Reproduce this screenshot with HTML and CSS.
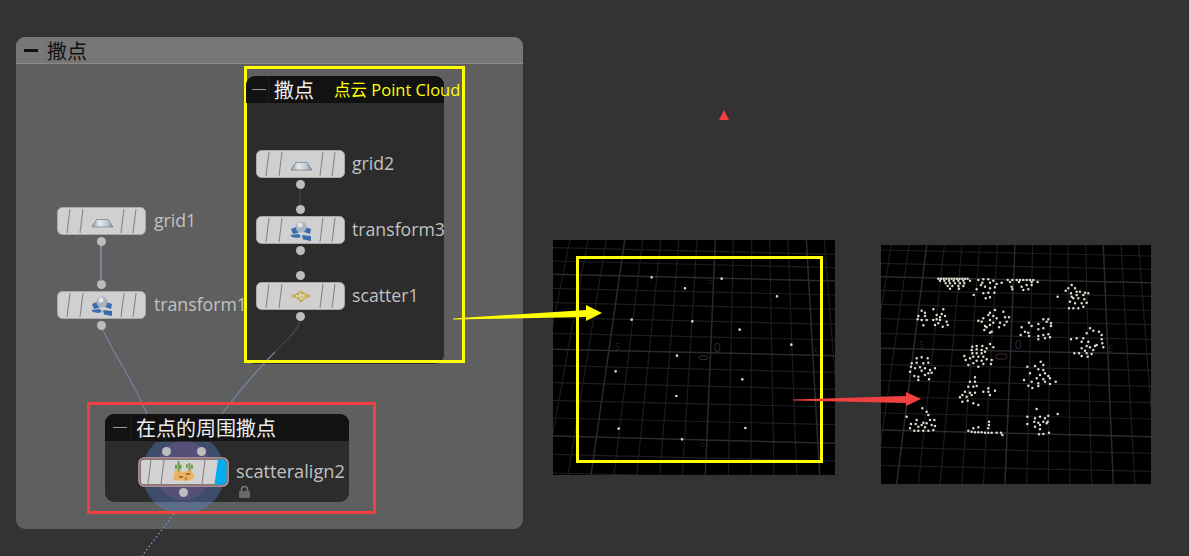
FILE: index.html
```html
<!DOCTYPE html>
<html lang="zh">
<head>
<meta charset="utf-8">
<title>撒点</title>
<link rel="stylesheet" href="styles.css">
</head>
<body>
<svg width="0" height="0" class="defs">
  <defs>
    <linearGradient id="gridFace" x1="0" x2="1" y1="0" y2="0">
      <stop offset="0" stop-color="#8f979e"/><stop offset=".35" stop-color="#e6eaec"/><stop offset=".7" stop-color="#c3ccd6"/><stop offset="1" stop-color="#7f95b0"/>
    </linearGradient>
    <symbol id="body" viewBox="0 0 89 28">
      <rect x=".5" y=".5" width="88" height="27" rx="5" fill="#d0d0d0" stroke="#a9a9a9"/>
      <path d="M13 2 10 26M26 2 23 26M67 2 64 26M79 2 76 26" stroke="#858585" stroke-width="1.100" fill="none"/>
    </symbol>
    <symbol id="ico-grid" viewBox="0 0 89 28">
      <path d="M35 20 39.500 12.500H51L56 20Z" fill="url(#gridFace)" stroke="#74797e" stroke-width=".7"/>
    </symbol>
    <symbol id="ico-transform" viewBox="0 0 89 28">
      <path d="M35 13 41 10.500 44 13 42 17 37 18ZM49 11 55 13 54 18 48 16ZM34 19 43 18 45 21 41 22 36 21ZM46 19 55 20 55 25 47 23.500Z" fill="#3a6cae"/>
      <circle cx="45" cy="11" r="5.500" fill="#aab3be"/>
      <circle cx="44" cy="9" r="2.500" fill="#e4e8ec"/>
    </symbol>
    <symbol id="ico-scatter" viewBox="0 0 89 28">
      <path d="M34.500 14 41 11 45 8 49 11 55.500 14 49 17 45 20.500 41 17Z" fill="#c6b266"/>
      <path d="M39 14 45 10.500 51 14 45 18Z" fill="#dfd49e"/>
      <path d="M42 12.500h0M46 11.500h0M49 14h0M43 16h0M46 15h0M38 14h0M52 14h0M45 19h0" stroke="#9c8a40" stroke-width="1.500" stroke-linecap="round"/>
    </symbol>
  </defs>
</svg>

<main class="canvas">
  <section class="netbox outer">
    <header class="netbox-head"><span class="minus"></span><h2>撒点</h2></header>
  </section>

  <div class="node n-grid1">
    <span class="dot dot-out"></span>
    <svg class="node-body"><use href="#body"/><use href="#ico-grid"/></svg>
    <span class="node-label">grid1</span>
  </div>
  <div class="node n-transform1">
    <span class="dot dot-in"></span><span class="dot dot-out"></span>
    <svg class="node-body"><use href="#body"/><use href="#ico-transform"/></svg>
    <span class="node-label">transform1</span>
  </div>

  <section class="netbox inner-a">
    <header class="netbox-head"><span class="minus"></span><h2>撒点</h2><span class="note">点云 Point Cloud</span></header>
    <div class="node n-grid2">
      <span class="dot dot-out"></span>
      <svg class="node-body"><use href="#body"/><use href="#ico-grid"/></svg>
      <span class="node-label">grid2</span>
    </div>
    <div class="node n-transform3">
      <span class="dot dot-in"></span><span class="dot dot-out"></span>
      <svg class="node-body"><use href="#body"/><use href="#ico-transform"/></svg>
      <span class="node-label">transform3</span>
    </div>
    <div class="node n-scatter1">
      <span class="dot dot-in"></span><span class="dot dot-out"></span>
      <svg class="node-body"><use href="#body"/><use href="#ico-scatter"/></svg>
      <span class="node-label">scatter1</span>
    </div>
  </section>

  <section class="netbox inner-b">
    <header class="netbox-head"><span class="minus"></span><h2>在点的周围撒点</h2></header>
  </section>
  <span class="halo"></span><span class="halo-core"></span>

  <svg class="wires" width="1189" height="556" viewBox="0 0 1189 556">
    <path d="M101 246V281" stroke="#8799b3" stroke-width="1.400" fill="none"/>
    <path d="M103 330C110 348 132 378 147 414" stroke="#7389a8" stroke-width="1.100" fill="none"/>
    <path d="M222 414C240 390 262 365 275 352" stroke="#7389a8" stroke-width="1.100" fill="none"/>
    <path d="M300 321C296 334 284 342 275 352" stroke="#3f4e63" stroke-width="1.100" fill="none"/>
    <path d="M300 189V205" stroke="#3f4e63" stroke-width="1" fill="none"/>
    <path d="M300 255V271" stroke="#3f4e63" stroke-width="1" stroke-dasharray="1.500 2" fill="none"/>
    <path d="M174 514 142 556" stroke="#6f93cc" stroke-width="1.400" stroke-dasharray="1.500 2.500" fill="none"/>
  </svg>

  <div class="node n-align">
    <span class="dot dot-in-a"></span><span class="dot dot-in-b"></span><span class="dot dot-out-c"></span>
    <svg class="align-body" width="91" height="30" viewBox="0 0 91 30">
      <rect x="1" y="1" width="89" height="28" rx="5.500" fill="#2a2222" stroke="#c49c9c" stroke-width="1.600"/>
      <rect x="2.500" y="2.500" width="86" height="25" rx="4" fill="#d2d2d2"/>
      <path d="M80 2.500H84.500A4 4 0 0 1 88.500 6.500V23.500A4 4 0 0 1 84.500 27.500H76.500Z" fill="#00aeef"/>
      <path d="M13 3 10 27M26 3 23 27M67 3 64 27" stroke="#858585" stroke-width="1.100" fill="none"/>
      <path d="M35 23 36.500 14 42 12.500 45 15.500 53 12.500 57 20.500 50 24Z" fill="#e9b364"/>
      <path d="M40.500 13.500V5M42.500 11V8.500M38 11V8.500M51.500 13V7M54 11V8.500M49 10V8" stroke="#6c9f4c" stroke-width="2" stroke-linecap="round"/>
      <path d="M41 20H45M48 17H52M47 21.500H49" stroke="#b26a2e" stroke-width="1.800"/>
    </svg>
    <span class="node-label">scatteralign2</span>
  </div>
  <svg class="lock" width="13" height="14" viewBox="0 0 13 14">
    <path d="M3.500 6V4.500A3 3 0 0 1 9.500 4.500V6" stroke="#777" stroke-width="1.600" fill="none"/>
    <rect x="1" y="6" width="11" height="7" rx="1" fill="#6a6a6a"/>
  </svg>

  <figure class="view view-a">
    <svg width="282" height="235" viewBox="25 15 846 705">
      <rect x="25" y="15" width="846" height="705" fill="#000"/>
      <path class="grid-minor" d="M76 15-67 720M130 15 2 720M185 15 70 720M294 15 208 720M348 15 276 720M403 15 345 720M457 15 413 720M566 15 551 720M621 15 619 720M675 15 688 720M730 15 756 720M839 15 894 720M25 38 871 58M25 78 871 98M25 160 871 180M25 203 871 223M25 248 871 268M25 295 871 315M25 392 871 412M25 443 871 463M25 496 871 516M25 549 871 569M25 658 871 678M25 714 871 734"/>
      <path class="grid-major" d="M240 15 139 720M512 15 482 720M785 15 825 720M25 118 871 138M25 343 871 362M25 603 871 625"/>
      <ellipse cx="476" cy="368" rx="14" ry="6" fill="none" stroke="#4a2c2c" stroke-width="3"/>
      <text class="vlabel big" x="518" y="350">0</text>
      <text class="vlabel" x="214" y="345">-5</text>
      <text class="vlabel" x="815" y="360">5</text>
      <text class="vlabel" x="470" y="636">-5</text>
      <text class="vlabel" x="495" y="146">5</text>
      <path class="pts-a" d="M321 127h0M421 160h0M531 131h0M697 184h0M261 254h0M443 259h0M585 284h0M740 329h0M397 362h0M213 409h0M593 433h0M395 483h0M222 581h0M602 579h0M412 613h0"/>
    </svg>
  </figure>

  <figure class="view view-b">
    <svg width="270" height="239" viewBox="18 15 810 717">
      <rect x="18" y="15" width="810" height="717" fill="#000"/>
      <path class="grid-minor" d="M49 15-65 732M102 15 0 732M208 15 130 732M261 15 195 732M314 15 260 732M367 15 325 732M473 15 455 732M526 15 520 732M579 15 585 732M632 15 650 732M738 15 780 732M791 15 845 732M18 30 828 48M18 70 828 88M18 151 828 169M18 193 828 211M18 236 828 254M18 280 828 298M18 373 828 391M18 421 828 439M18 470 828 488M18 519 828 537M18 622 828 640M18 676 828 694"/>
      <path class="grid-major" d="M155 15 65 732M420 15 390 732M685 15 715 732M18 110 828 128M18 325 828 342M18 570 828 590"/>
      <rect x="362" y="342" width="34" height="15" rx="7" fill="none" stroke="#4a2c2c" stroke-width="3"/>
      <text class="vlabel big" x="430" y="326">0</text>
      <text class="vlabel" x="137" y="323">-5</text>
      <text class="vlabel" x="707" y="337">5</text>
      <text class="vlabel" x="378" y="597">-5</text>
      <path class="pts-b" d="M190 116h0M198 116h0M206 116h0M214 116h0M222 116h0M230 116h0M238 116h0M246 116h0M254 116h0M262 116h0M270 116h0M278 116h0M195 122h0M208 122h0M222 122h0M236 122h0M250 122h0M265 122h0M285 122h0M212 130h0M225 130h0M240 130h0M255 130h0M268 130h0M218 138h0M232 138h0M250 138h0M265 138h0M225 146h0M252 146h0M310 120h0M325 118h0M340 118h0M355 122h0M322 128h0M345 128h0M365 132h0M380 128h0M305 148h0M330 140h0M345 145h0M360 142h0M296 165h0M325 160h0M340 158h0M358 158h0M332 175h0M345 172h0M318 135h0M398 120h0M412 120h0M425 120h0M435 120h0M445 120h0M455 120h0M465 120h0M475 120h0M405 126h0M432 126h0M470 126h0M488 126h0M410 140h0M412 148h0M440 140h0M455 135h0M470 135h0M445 150h0M460 148h0M590 135h0M580 145h0M572 152h0M600 145h0M615 155h0M630 158h0M640 160h0M588 160h0M605 165h0M625 165h0M595 175h0M610 175h0M628 178h0M585 185h0M600 190h0M620 190h0M635 188h0M582 205h0M595 205h0M610 205h0M625 200h0M548 170h0M605 155h0M590 170h0M140 212h0M150 218h0M175 208h0M205 208h0M130 228h0M150 228h0M185 225h0M200 222h0M210 228h0M128 238h0M140 240h0M155 240h0M175 240h0M185 238h0M195 240h0M215 245h0M145 256h0M190 250h0M180 255h0M203 260h0M218 255h0M195 232h0M345 218h0M360 210h0M385 215h0M355 228h0M340 225h0M325 235h0M310 242h0M320 245h0M345 240h0M365 235h0M390 232h0M402 232h0M330 258h0M345 255h0M355 248h0M375 248h0M395 245h0M328 270h0M350 275h0M372 262h0M388 255h0M335 262h0M345 278h0M505 238h0M520 238h0M462 248h0M490 252h0M515 245h0M528 250h0M440 262h0M470 258h0M490 268h0M505 265h0M528 258h0M450 275h0M437 285h0M462 288h0M460 278h0M490 288h0M505 285h0M520 283h0M525 292h0M490 298h0M510 295h0M645 265h0M655 272h0M672 275h0M635 280h0M680 285h0M625 295h0M680 298h0M588 298h0M605 295h0M620 305h0M640 305h0M682 310h0M635 318h0M660 318h0M685 322h0M620 325h0M645 322h0M630 332h0M655 330h0M665 315h0M598 340h0M612 340h0M635 340h0M650 342h0M620 348h0M638 350h0M292 320h0M305 318h0M322 318h0M345 312h0M355 322h0M290 330h0M305 328h0M320 330h0M335 325h0M292 340h0M305 340h0M320 340h0M330 335h0M268 348h0M295 350h0M310 350h0M325 350h0M272 360h0M285 355h0M305 362h0M320 362h0M335 358h0M350 360h0M280 375h0M295 370h0M310 380h0M325 372h0M348 372h0M125 355h0M140 352h0M158 355h0M110 370h0M125 368h0M145 370h0M160 368h0M108 380h0M120 385h0M135 382h0M150 385h0M105 395h0M140 392h0M165 390h0M180 385h0M118 408h0M130 410h0M150 405h0M160 400h0M130 420h0M162 418h0M170 398h0M497 365h0M505 375h0M480 378h0M457 380h0M490 388h0M505 390h0M465 400h0M495 405h0M510 400h0M520 408h0M485 415h0M505 418h0M525 415h0M447 420h0M470 425h0M490 430h0M510 425h0M525 432h0M542 425h0M460 437h0M472 444h0M490 438h0M300 412h0M285 425h0M300 425h0M280 440h0M295 440h0M305 438h0M340 445h0M360 452h0M325 455h0M270 455h0M285 458h0M300 458h0M345 465h0M262 465h0M275 470h0M290 465h0M255 472h0M262 485h0M278 482h0M295 490h0M310 495h0M340 455h0M142 505h0M155 515h0M160 525h0M95 530h0M125 540h0M145 548h0M165 540h0M178 540h0M108 552h0M122 552h0M140 555h0M155 550h0M170 555h0M180 558h0M105 565h0M118 572h0M130 572h0M145 572h0M160 572h0M175 570h0M130 560h0M150 562h0M342 545h0M342 555h0M340 565h0M310 562h0M295 565h0M280 572h0M290 575h0M300 577h0M310 577h0M320 577h0M330 578h0M340 578h0M350 578h0M365 578h0M378 578h0M382 585h0M485 507h0M520 527h0M548 522h0M480 535h0M495 530h0M510 535h0M478 545h0M490 548h0M505 545h0M518 545h0M457 530h0M457 552h0M495 555h0M515 550h0M480 560h0M495 568h0M492 583h0M505 582h0M522 578h0"/>
    </svg>
  </figure>

  <div class="frame frame-yellow-a"></div>
  <div class="frame frame-yellow-b"></div>
  <div class="frame frame-red"></div>

  <svg class="arrows" width="1189" height="556" viewBox="0 0 1189 556">
    <path d="M453 318.500V319.500L586 317V321L602 313 586 305V310Z" fill="#ffff00"/>
    <path d="M793 399.500V400.500L906 403V406L921 399 906 392V396Z" fill="#f04040"/>
    <path d="M724 110 729 120H719Z" fill="#f04040"/>
  </svg>
</main>
</body>
</html>
```

FILE: styles.css
```css
* { box-sizing: border-box; }
html, body { margin: 0; height: 100%; }
body {
  background: #333333;
  overflow: hidden;
  font-family: "Open Sans", "Noto Sans CJK SC", sans-serif;
}
.defs { position: absolute; }
.canvas { position: relative; width: 1189px; height: 556px; overflow: hidden; }

/* network boxes sit on a free canvas */
.netbox { position: absolute; border-radius: 9px; }
.netbox-head { display: flex; align-items: center; height: 27px; border-radius: 9px 9px 0 0; }
.netbox-head h2 {
  margin: 0;
  font: 400 20px/27px "Noto Sans CJK SC", sans-serif;
  white-space: nowrap;
}
.minus { display: flex; align-items: center; justify-content: flex-end; flex: none; height: 100%; border-right: 1px solid rgba(255,255,255,.06); }
.minus::before { content: ""; width: 14px; height: 2px; background: currentColor; margin-right: 3px; }

.outer { left: 16px; top: 37px; width: 507px; height: 492px; background: #5f5f5f; }
.outer .netbox-head { background: #767676; border-bottom: 1px solid #8a8a8a; color: #111; }
.outer .minus { width: 26px; margin-right: 5px; }
.outer .minus::before { height: 3px; }

.inner-a { left: 246px; top: 76px; width: 198px; height: 288px; background: #2c2c2c; }
.inner-a .netbox-head, .inner-b .netbox-head { background: #121212; color: #eee; position: relative; z-index: 1; }
.inner-a .minus { width: 23px; margin-right: 5px; color: #9a9a9a; }
.inner-a .minus::before { height: 1.500px; margin-right: 2px; }
.note { margin-left: 20px; color: #ffff00; font: 400 16.500px/27px "Open Sans", "Noto Sans CJK SC", sans-serif; white-space: nowrap; }

.inner-b { left: 105px; top: 414px; width: 244px; height: 88px; background: #2c2c2c; }
.inner-b .minus { width: 26px; margin-right: 5px; color: #9a9a9a; }
.inner-b .minus::before { height: 1.500px; }

.halo, .halo-core { position: absolute; border-radius: 50%; }
.halo { left: 142px; top: 432px; width: 83px; height: 82px; background: rgba(95,135,215,.36); clip-path: inset(10px 0 0 0); }
.halo-core { left: 155px; top: 441px; width: 57px; height: 59px; background: rgba(165,90,170,.22); }

/* nodes */
.node { position: absolute; display: flex; align-items: center; gap: 7px; height: 28px; width: 89px; }
.node-body { flex: none; width: 89px; height: 28px; filter: blur(.35px); }
.node-body use { width: 89px; height: 28px; }
.node-label { flex: none; font-size: 17.700px; line-height: 26px; margin-top: -2px; color: #c2c2c2; white-space: nowrap; }
.dot { position: absolute; width: 9px; height: 9px; border-radius: 50%; background: #bdbdbd; left: 40px; }
.dot-out { top: 30px; }
.dot-in { top: -11px; }

.n-grid1 { left: 57px; top: 207px; gap: 8px; }
.n-transform1 { left: 57px; top: 291px; gap: 8px; }
.n-grid2 { left: 10px; top: 74px; }
.n-transform3 { left: 10px; top: 140px; }
.n-scatter1 { left: 10px; top: 206px; }

.n-align { left: 138px; top: 457px; width: 91px; height: 30px; }
.n-align .node-label { font-size: 18.200px; }
.align-body { flex: none; filter: blur(.35px); }
.dot-in-a { left: 24px; top: -10px; }
.dot-in-b { left: 59px; top: -10px; }
.dot-out-c { left: 41px; top: 31px; }
.lock { position: absolute; left: 238px; top: 485px; }

/* wires and annotations drawn over the network */
.wires, .arrows { position: absolute; left: 0; top: 0; pointer-events: none; }

/* viewport thumbnails */
.view { position: absolute; margin: 0; line-height: 0; }
.view svg { filter: blur(.3px); }
.view-a { left: 553px; top: 240px; }
.view-b { left: 881px; top: 245px; }
.grid-minor { stroke: #1b1d20; stroke-width: 3.500; fill: none; }
.grid-major { stroke: #282b30; stroke-width: 4.500; fill: none; }
.vlabel { fill: #22262c; font: 400 26px "Open Sans", sans-serif; text-anchor: middle; }
.vlabel.big { font-size: 38px; fill: #262c38; }
.pts-a { stroke: #d6d6c8; stroke-width: 8; stroke-linecap: round; fill: none; }
.pts-b { stroke: #dcdccc; stroke-width: 7.500; stroke-linecap: round; fill: none; }

/* highlight frames */
.frame { position: absolute; pointer-events: none; }
.frame-yellow-a { left: 244px; top: 66px; width: 221px; height: 297px; border: 3px solid #ffff00; }
.frame-yellow-b { left: 576px; top: 256px; width: 247px; height: 207px; border: 3px solid #ffff00; }
.frame-red { left: 87px; top: 402px; width: 289px; height: 112px; border: 3px solid #f04040; }
```
